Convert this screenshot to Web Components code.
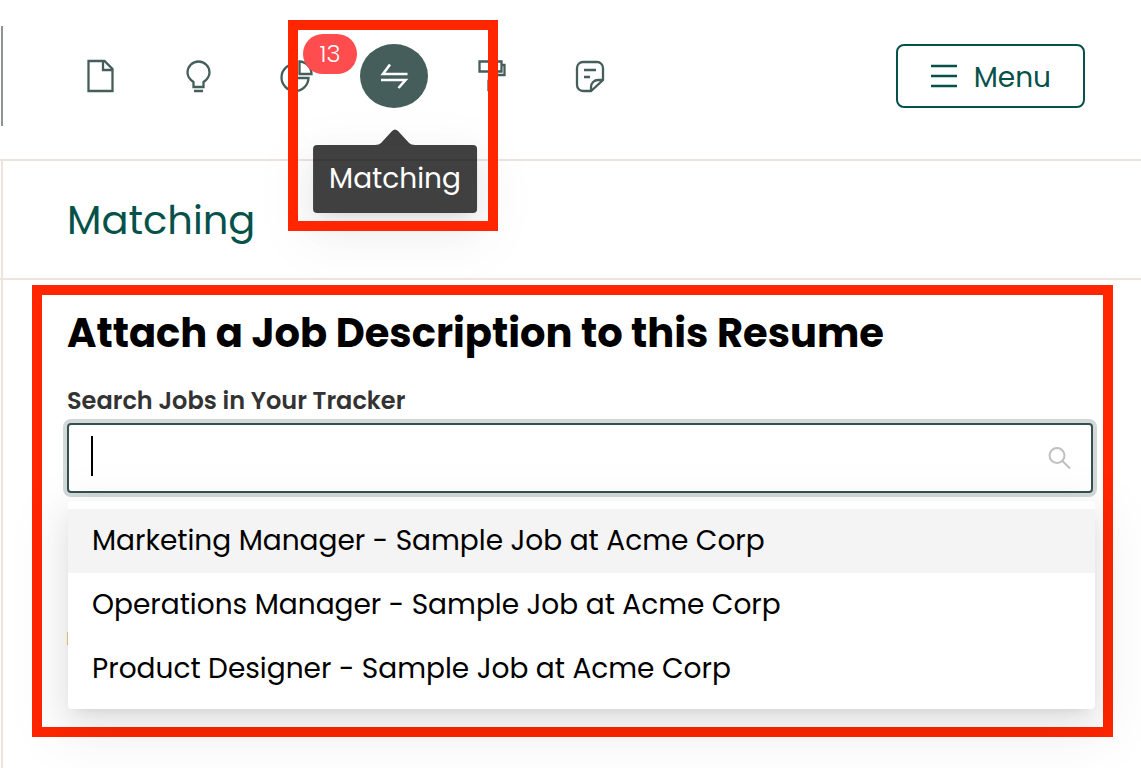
<!DOCTYPE html>
<html lang="en">
<head>
<meta charset="utf-8">
<title>Matching</title>
<style>
  body { margin: 0; background: #fff; font-family: Poppins, Inter, "Open Sans", sans-serif; color: #000; }
</style>
</head>
<body>
<resume-app></resume-app>

<script>
const define = (name, html, setup) => customElements.define(name, class extends HTMLElement {
  constructor() {
    super();
    this.attachShadow({ mode: 'open' }).innerHTML = html;
  }
  connectedCallback() { if (setup) setup(this, this.shadowRoot); }
});

const icons = {
  file: '<path d="M8.500 5h16l8 8v22h-24zM23 5v9h9.500"/>',
  bulb: '<path d="M15.500 26c-3-2-6-5-6-9.500a11 11 0 0 1 22 0c0 4.500-3 7.500-6 9.500v5h-10zM16 35h9"/>',
  chart: '<path d="M19 8a13.500 13.500 0 1 0 13.500 14H19zM23.500 5.500V18H35.500A12.500 12.500 0 0 0 23.500 5.500z"/>',
  swap: '<path d="M33.500 18H9l7-9.500M7 24h24.500l-7 8" stroke-width="2.600"/>',
  roller: '<path d="M7.500 5.500h22v10h-22zM29.500 9h3v10H17v5M16.500 25h5v9h-5z"/>',
  note: '<path d="M33 24V12a6 6 0 0 0-6-6H13a6 6 0 0 0-6 6v17a6 6 0 0 0 6 6h8zM21 35v-4a7 7 0 0 1 7-7h5M14 14h12M14 21h6"/>',
};

define('nav-icon', `
  <style>
    :host { display: flex; justify-content: center; position: relative; width: 98px; }
    button { display: flex; align-items: center; justify-content: center; width: 68px; height: 64px;
      padding: 0; border: 0; border-radius: 50%; background: none; color: #455e5c; }
    :host([active]) button { background: #455e5c; color: #fff; }
    svg { width: 40px; height: 40px; fill: none; stroke: currentColor; stroke-width: 2.300; }
  </style>
  <button type="button"><svg viewBox="0 0 40 40" aria-hidden="true"></svg></button>
  <slot></slot>`,
  (el, root) => {
    root.querySelector('svg').innerHTML = icons[el.getAttribute('icon')];
    root.querySelector('button').setAttribute('aria-label', el.getAttribute('label'));
  });

define('count-badge', `
  <style>
    :host { position: absolute; z-index: 1; top: -10px; left: 56px; width: 54px; height: 40px; border-radius: 20px;
      background: #ff4d4f; color: #fff; font-size: 24px; font-weight: 300; line-height: 40px; text-align: center; }
  </style><slot></slot>`);

define('tool-tip', `
  <style>
    :host { position: absolute; z-index: 2; top: 101px; left: 50px; transform: translateX(-50%);
      border-radius: 4px; background: rgba(0, 0, 0, .75); color: #fff; padding: 14px 16px;
      font-size: 28px; line-height: 40px; white-space: nowrap;
      box-shadow: 0 6px 12px -8px rgba(0,0,0,.12), 0 12px 32px rgba(0,0,0,.06), 0 18px 56px 16px rgba(0,0,0,.04); }
    svg { position: absolute; bottom: 100%; left: 50%; width: 40px; height: 16px; margin-left: -20px; fill: rgba(0, 0, 0, .75); }
  </style>
  <svg viewBox="0 0 40 16" aria-hidden="true"><path d="M0 16q4 0 6-2L17 2q3-3 6 0l11 12q2 2 6 2z"/></svg>
  <slot></slot>`);

define('call-out', `
  <style>
    :host { position: absolute; z-index: 3; top: -24px; left: -57px; width: 210px; height: 211px;
      box-sizing: border-box; border: 10px solid #ff2600; pointer-events: none; }
  </style>`);

define('menu-button', `
  <style>
    :host { display: block; margin-left: auto; }
    button { display: flex; align-items: center; gap: 16px; height: 64px; padding: 0 32px; box-sizing: border-box;
      border: 2px solid #06524a; border-radius: 8px; background: #fff; color: #06524a; font: inherit; font-size: 28px; }
    span { padding-top: 3px; }
    svg { width: 28px; height: 28px; stroke: currentColor; stroke-width: 2.300; }
  </style>
  <button type="button"><svg viewBox="0 0 28 28" aria-hidden="true"><path d="M1 4h26M1 14h26M1 24h26"/></svg><span><slot></slot></span></button>`);

define('top-bar', `
  <style>
    :host { display: flex; align-items: center; padding: 26px 56px 33px 1px; border-bottom: 2px solid #ede4de; }
    .divider { width: 2px; height: 100px; background: #8f9394; }
    nav { display: flex; margin-left: 48px; }
  </style>
  <span class="divider"></span>
  <nav>
    <nav-icon icon="file" label="Resume"></nav-icon>
    <nav-icon icon="bulb" label="Ideas"></nav-icon>
    <nav-icon icon="chart" label="Analysis"><count-badge>13</count-badge></nav-icon>
    <nav-icon icon="swap" label="Matching" active><tool-tip>Matching</tool-tip><call-out></call-out></nav-icon>
    <nav-icon icon="roller" label="Design"></nav-icon>
    <nav-icon icon="note" label="Notes"></nav-icon>
  </nav>
  <menu-button>Menu</menu-button>`);

define('section-title', `
  <style>
    :host { display: block; margin-left: -3px; padding: 29px 67px 28px; border-bottom: 2px solid #ede4de; }
    h1 { margin: 0; color: #06524a; font-size: 40px; font-weight: 400; line-height: 60px; }
  </style>
  <h1><slot></slot></h1>`);

define('search-field', `
  <style>
    :host { display: block; }
    label { display: block; margin-bottom: 6px; color: #333; font-size: 24px; font-weight: 600; line-height: 32px; }
    .box { display: flex; align-items: center; height: 70px; box-sizing: border-box; padding: 0 20px 0 22px;
      border: 2px solid #36504e; border-radius: 4px; box-shadow: 0 0 0 4px #d1dad9; }
    .caret { width: 2px; height: 40px; margin-bottom: 4px; background: #000; }
    input { flex: 1; min-width: 0; border: 0; outline: 0; padding: 0; background: none; font: inherit; font-size: 28px; }
    svg { width: 24px; height: 24px; fill: none; stroke: #bfbfbf; stroke-width: 2; }
  </style>
  <label for="q"><slot></slot></label>
  <div class="box"><span class="caret"></span><input id="q" type="text">
    <svg viewBox="0 0 24 24" aria-hidden="true"><circle cx="10" cy="9.500" r="7.500"/><path d="M15 14.500l8 8"/></svg></div>`);

define('option-list', `
  <style>
    :host { display: block; position: relative; margin: 8px -2px 0 1px; padding: 8px 0; border-radius: 4px; background: #fff;
      box-shadow: 0 6px 12px -8px rgba(0,0,0,.12), 0 12px 32px rgba(0,0,0,.08), 0 18px 56px 16px rgba(0,0,0,.05); }
    /* edge of the marker that the list covers */
    :host::before { content: ""; position: absolute; top: 131px; left: -1px; width: 1px; height: 13px; background: #dcb873; }
  </style>
  <div role="listbox" aria-label="Jobs"><slot></slot></div>`);

define('job-option', `
  <style>
    :host { display: block; padding: 0 24px; font-size: 28px; line-height: 64px; white-space: nowrap; }
    :host([selected]) { background: #f4f4f4; }
  </style>
  <slot></slot>`, el => el.setAttribute('role', 'option'));

define('attach-panel', `
  <style>
    :host { display: block; margin: 5px 28px 0 29px; padding: 8px 10px 18px 25px; border: 10px solid #ff2600; }
    h2 { margin: 0 0 22px; font-size: 40px; font-weight: 700; line-height: 60px; white-space: nowrap; }
  </style>
  <h2>Attach a Job Description to this Resume</h2>
  <search-field>Search Jobs in Your Tracker</search-field>
  <option-list>
    <job-option selected>Marketing Manager - Sample Job at Acme Corp</job-option>
    <job-option>Operations Manager - Sample Job at Acme Corp</job-option>
    <job-option>Product Designer - Sample Job at Acme Corp</job-option>
  </option-list>`);

define('resume-app', `
  <style>
    :host { display: flex; flex-direction: column; min-height: 100vh; }
    main { flex: 1; margin-left: 1px; border-left: 2px solid #ede4de; }
  </style>
  <top-bar></top-bar>
  <main>
    <section-title>Matching</section-title>
    <attach-panel></attach-panel>
  </main>`);
</script>
</body>
</html>
